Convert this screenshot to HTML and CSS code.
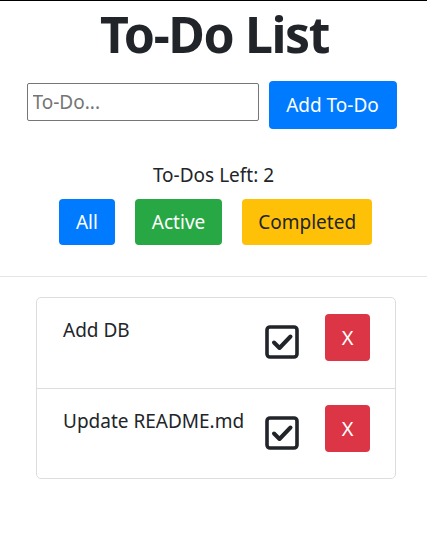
FILE: index.html
```html
<!DOCTYPE html>
<html>
<head>
<meta charset="utf-8">
<link rel="stylesheet" href="styles.css">
</head>
<body>
<div class="app">
  <h1 class="title">To-Do List</h1>
  <form class="add-form">
    <input class="todo-input" type="text" placeholder="To-Do...">
    <button type="button" class="btn btn-lg btn-primary">Add To-Do</button>
  </form>
  <p class="left">To-Dos Left: 2</p>
  <div class="filters">
    <button type="button" class="btn btn-primary">All</button>
    <button type="button" class="btn btn-success">Active</button>
    <button type="button" class="btn btn-warning">Completed</button>
  </div>
  <hr class="divider">
  <ul class="list">
    <li class="item">
      <span class="item-text">Add DB</span>
      <span class="check">
        <svg viewBox="0 0 36 36" width="36" height="36"><rect x="3" y="3" width="30" height="30" rx="3" fill="none" stroke="#212529" stroke-width="3.6"/><path d="M10 18.5 L15.5 24 L26.5 12.5" fill="none" stroke="#212529" stroke-width="4" stroke-linecap="round" stroke-linejoin="round"/></svg>
      </span>
      <button type="button" class="btn btn-danger del">X</button>
    </li>
    <li class="item">
      <span class="item-text">Update README.md</span>
      <span class="check">
        <svg viewBox="0 0 36 36" width="36" height="36"><rect x="3" y="3" width="30" height="30" rx="3" fill="none" stroke="#212529" stroke-width="3.6"/><path d="M10 18.5 L15.5 24 L26.5 12.5" fill="none" stroke="#212529" stroke-width="4" stroke-linecap="round" stroke-linejoin="round"/></svg>
      </span>
      <button type="button" class="btn btn-danger del">X</button>
    </li>
  </ul>
</div>
</body>
</html>
```
FILE: styles.css
```css
* { box-sizing: border-box; }
html, body { margin: 0; padding: 0; }
body {
  border-top: 1px solid #000;
  font-family: "Noto Sans", "Open Sans", sans-serif;
  color: #212529;
  background: #fff;
}
.app { display: flex; flex-direction: column; align-items: center; }
.title {
  margin: 0 0 0 2px;
  font-size: 50px;
  font-weight: 700;
  line-height: 66px;
  letter-spacing: -1.4px;
}
.add-form {
  display: flex;
  align-items: flex-start;
  gap: 10px;
  margin-top: 14px;
  margin-right: 4px;
}
.todo-input {
  width: 232px;
  height: 38px;
  margin-top: 2px;
  border: 1px solid #767676;
  border-radius: 2px;
  padding: 0 5px;
  font-family: inherit;
  font-size: 19px;
  color: #212529;
}
.todo-input::placeholder { color: #757575; }
.btn {
  border: 0;
  border-radius: 4px;
  font-family: inherit;
  font-size: 19px;
  line-height: 28px;
  padding: 9px 13px;
  color: #fff;
  cursor: pointer;
}
.btn-lg { padding: 10px 16px; width: 128px; }
.btn-primary { background: #007bff; }
.btn-success { background: #28a745; }
.btn-warning { background: #ffc107; color: #212529; }
.btn-danger { background: #dc3545; }
.left {
  margin: 33px 0 0;
  font-size: 19px;
  line-height: 26px;
}
.filters {
  display: flex;
  gap: 20px;
  margin-top: 11px;
  margin-left: 4px;
}
.filters .btn { height: 46px; padding: 0 17px; }
.filters .btn-warning { padding: 0 16px; }
.divider {
  align-self: stretch;
  margin: 31px 0 0;
  border: 0;
  border-top: 1px solid #e5e5e5;
}
.list {
  list-style: none;
  margin: 20px 0 0 5px;
  padding: 0;
  width: 360px;
  border: 1px solid #ddd;
  border-radius: 5px;
}
.item {
  display: flex;
  align-items: flex-start;
  height: 90px;
  padding: 16px 25px 0 26px;
}
.item + .item { border-top: 1px solid #ddd; }
.item-text {
  flex: 1;
  font-size: 19px;
  line-height: 26px;
  padding-top: 3px;
}
.check { display: block; width: 36px; height: 36px; margin-top: 10px; margin-right: 25px; }
.check svg { display: block; }
.del {
  width: 45px;
  height: 47px;
  padding: 0;
  font-size: 20px;
}
```
